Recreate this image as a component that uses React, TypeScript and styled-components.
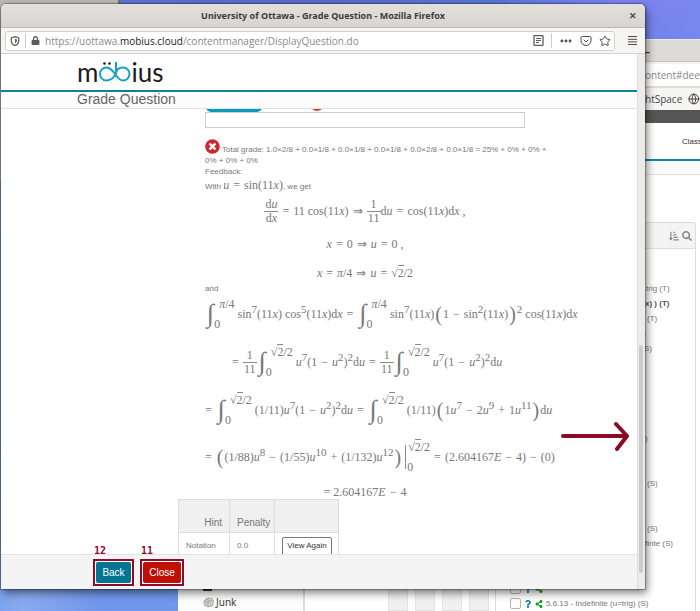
import React from "react";
import styled, { createGlobalStyle } from "styled-components";
import { Globe, MoreHorizontal, Pocket, Star } from "lucide-react";
import { FaLock, FaSearch, FaShareAlt, FaSortAmountDownAlt, FaTimesCircle, FaQuestion } from "react-icons/fa";

const Global = createGlobalStyle`
  *, *::before, *::after { box-sizing: border-box; }
  body { margin: 0; overflow: hidden; }
  button, input { font: inherit; }
`;

const ui = `"Noto Sans", "Open Sans", sans-serif`;
const urlFace = `"Open Sans", "Noto Sans", sans-serif`;
const sans = `"Liberation Sans", Arial, sans-serif`;
const mark = "#8f0a2c";

/* ---------- desktop and windows ---------- */

const Desktop = styled.div`
  position: relative;
  height: 100vh;
  overflow: hidden;
  font-family: ${sans};
  font-size: 8px;
  color: #777;
  background:
    radial-gradient(ellipse 160px 60px at 92% 0, #7d84f0, transparent),
    linear-gradient(90deg, #6c7ad6 0, #5b70cc 25%, #5a6bc8 45%, #5a78d6 80%, #728af0 100%) top / 100% 100px no-repeat,
    linear-gradient(100deg, #7ba6f0 0, #6f98ea 10%, #8aaaf0 16%, #6f96ea 26%, #7da0ee 100%);
`;

const CornerWindow = styled.div`
  position: absolute;
  left: 0;
  top: 0;
  width: 120px;
  height: 180px;
  background: #b9b8b6;
  border-right: 2px solid #6c6c80;
`;

const MailWindow = styled.div`
  position: absolute;
  left: 178px;
  bottom: 0;
  width: 128px;
  height: 120px;
  background: #fcfcfc;
  border-right: 3px solid #ddd;
  display: flex;
  flex-direction: column;
  justify-content: flex-end;
  padding: 0 0 1px 25px;
`;

const Folder = styled.div`
  display: flex;
  align-items: center;
  gap: 2px;
  font: 10px/16px ${ui};
  color: #3a3a3a;
`;

const FolderMark = styled.div`
  width: 9px;
  height: 10px;
  margin-bottom: 3px;
  background: #333;
`;

const BackWindow = styled.div`
  position: absolute;
  left: 305px;
  right: 0;
  top: 39px;
  bottom: 0;
  display: flex;
  flex-direction: column;
  background: #fff;
  border-top: 1px solid #eceaf2;
`;

const Edge = styled.div<{ $h: number; $bg: string }>`
  flex: none;
  display: flex;
  align-items: center;
  height: ${(p) => p.$h}px;
  padding-left: calc(100% - 55px);
  background: ${(p) => p.$bg};
  white-space: nowrap;
  overflow: hidden;
`;

const BackTitle = styled(Edge)`
  border-bottom: 1px solid #c9c5c1;
  font: bold 10px/20px ${ui};
  color: #333;
`;

const BackUrl = styled(Edge)`
  border-top: 2px solid #f4f3f1;
  border-bottom: 2px solid #dedbd8;
  font: 10px/20px ${urlFace};
  color: #888;
`;

const Bookmarks = styled(Edge)`
  gap: 6px;
  font: 10px/20px ${urlFace};
  color: #444;
`;

const BackNav = styled(Edge)`
  padding-left: calc(100% - 18px);
  border-bottom: 2px solid #0d87a3;
  color: #333;
`;

const BackStrip = styled(Edge)`
  border-bottom: 1px solid #ddd;
`;

const BackBody = styled.div`
  flex: 1;
  min-height: 0;
  display: flex;
  padding: 47px 4px 0 83px;
`;

const Grid = styled.div`
  flex: none;
  width: 107px;
  display: grid;
  grid-template-columns: repeat(4, 20px);
  gap: 7px;
`;

const GridCol = styled.div`
  background: #f0f0f0;
  border: 1px solid #e4e4e4;
`;

const Panel = styled.section`
  flex: 1;
  min-width: 0;
  border: 1px solid #ddd;
  border-bottom: 0;
  border-radius: 3px 3px 0 0;
  overflow: hidden;
`;

const PanelHead = styled.header`
  height: 26px;
  display: flex;
  align-items: center;
  justify-content: flex-end;
  gap: 3px;
  padding-right: 3px;
  background: #f4f4f4;
  border-bottom: 1px solid #ddd;
  font-size: 10px;
  color: #888;
`;

const List = styled.ul`
  margin: 0;
  padding: 32px 0 0 14px;
  list-style: none;
`;

const Item = styled.li<{ $indent?: number; $bold?: boolean }>`
  height: 15px;
  display: flex;
  align-items: center;
  gap: 4px;
  padding-left: ${(p) => p.$indent ?? 0}px;
  font-weight: ${(p) => (p.$bold ? "bold" : "normal")};
  color: ${(p) => (p.$bold ? "#555" : "#777")};
  white-space: nowrap;
`;

const QuestionItem = styled(Item)`
  gap: 3px;
`;

const Tick = styled.input`
  appearance: none;
  width: 11px;
  height: 11px;
  margin: 0;
  border: 1px solid #bbb4a8;
  border-radius: 2px;
  background: #fff;
`;

const FrontWindow = styled.main`
  position: absolute;
  inset: 4px 55px 22px 1px;
  display: flex;
  flex-direction: column;
  border-radius: 5px 5px 0 0;
  background: #fff;
  box-shadow: 0 0 1px 1px rgba(0, 0, 0, 0.3), 2px 4px 9px rgba(0, 0, 0, 0.5);
`;

const TitleBar = styled.header`
  flex: none;
  height: 24px;
  display: grid;
  grid-template-columns: 24px 1fr 24px;
  align-items: center;
  border-radius: 5px 5px 0 0;
  background: linear-gradient(#e3e0dc, #d8d4cf);
  border-bottom: 1px solid #bfb8b1;
  font: bold 9px/20px ${ui};
  color: #383c3e;
  text-align: center;
`;

const PlainButton = styled.button`
  display: flex;
  align-items: center;
  justify-content: center;
  padding: 0;
  border: 0;
  background: none;
  color: #4a4a4a;
`;

const ToolBar = styled.div`
  flex: none;
  height: 26px;
  display: flex;
  align-items: center;
  gap: 13px;
  padding: 0 8px 0 4px;
  background: #f6f5f4;
  border-bottom: 1px solid #d3d0cc;
`;

const UrlField = styled.div`
  flex: 1;
  height: 20px;
  display: flex;
  align-items: center;
  gap: 5px;
  padding: 0 3px 0 4px;
  background: #fff;
  border: 1px solid #d4d0cb;
  border-radius: 3px;
  color: #5c5c5c;
`;

const Url = styled.div`
  flex: 1;
  font: 10px/18px ${urlFace};
  color: #8a8a8a;
  b { font-weight: normal; color: #222; }
`;

const UrlTools = styled.div`
  display: flex;
  align-items: center;
  gap: 7px;
`;

const Divider = styled.i`
  width: 1px;
  height: 15px;
  background: #ccc;
`;

const View = styled.div`
  flex: 1;
  min-height: 0;
  display: flex;
`;

const Page = styled.div`
  position: relative;
  flex: 1;
  min-width: 0;
  display: flex;
  flex-direction: column;
`;

const ScrollTrack = styled.div`
  flex: none;
  width: 8px;
  padding: 291px 2px 16px 1px;
  background: #ecebe9;
  border-left: 1px solid #e0dedc;
  display: flex;
`;

const ScrollThumb = styled.div`
  flex: 1;
  border-radius: 2px;
  background: #cbcbcb;
`;

/* ---------- page content ---------- */

const Brand = styled.div`
  flex: none;
  height: 38px;
  display: flex;
  align-items: center;
  padding-left: 76px;
  border-bottom: 2px solid #0d809b;
  font: 26px/34px Lato, sans-serif;
  color: #1c1c1c;
`;

const PageTitle = styled.h1`
  flex: none;
  height: 17px;
  margin: 0;
  padding-left: 76px;
  background: #fcfcfc;
  border-bottom: 1px solid #e2e2e2;
  font: 14px/14px ${sans};
  color: #666;
`;

const Scroll = styled.div`
  flex: 1;
  min-height: 0;
  overflow: hidden;
  display: flex;
  flex-direction: column;
`;

const Clipped = styled.div`
  flex: none;
  height: 3px;
  display: flex;
  align-items: flex-end;
  gap: 49px;
  padding-left: 205px;
  overflow: hidden;
`;

const Pill = styled.button`
  width: 56px;
  height: 18px;
  border: 0;
  border-radius: 5px;
  background: #079bc1;
`;

const RedDot = styled.span`
  width: 12px;
  height: 12px;
  margin-bottom: 1px;
  border-radius: 50%;
  background: #cf3a3a;
`;

const Answer = styled.input`
  flex: none;
  width: 320px;
  height: 16px;
  margin: 0 0 0 204px;
  padding: 0 4px;
  border: 1px solid #ccc;
  background: #fff;
`;

const Feedback = styled.div`
  flex: none;
  width: 352px;
  margin: 11px 0 0 204px;
  line-height: 11px;
`;

const Grade = styled.p`
  margin: 0;
  svg { vertical-align: -2px; margin-right: 2px; }
`;

const Line = styled.p<{ $h: number }>`
  height: ${(p) => p.$h}px;
  margin: 0;
  line-height: ${(p) => p.$h}px;
  white-space: nowrap;
`;

const mathFont = `12px/14px "Liberation Serif", "Times New Roman", serif`;

const Row = styled.div<{ $h: number }>`
  width: 320px;
  height: ${(p) => p.$h}px;
  display: flex;
  align-items: center;
  justify-content: safe center;
  font: ${mathFont};
  white-space: nowrap;
  > * { flex: none; }
`;

const T = styled.span`
  font: ${mathFont};
  sup { font-size: 11px; line-height: 0; vertical-align: 5px; }
`;

const Op = styled.span`
  margin: 0 4px;
`;

const Lead = styled.span`
  margin-right: 4px;
`;

const FracBox = styled.span`
  display: flex;
  flex-direction: column;
  align-items: center;
  line-height: 13px;
`;

const Numer = styled.span`
  min-width: 14px;
  text-align: center;
  padding: 0 1px;
  border-bottom: 1px solid #888;
`;

const Fence = styled.span`
  padding: 0 1px;
  font-size: 20px;
  line-height: 22px;
  font-family: "Liberation Serif", serif;
`;

const IntBox = styled.span`
  display: flex;
  align-items: center;
  margin: 0 3px 0 2px;
`;

const IntSign = styled.span`
  font: 26px/30px "Liberation Serif", serif;
`;

const Limits = styled.span<{ $shift: number }>`
  height: 32px;
  display: flex;
  flex-direction: column;
  justify-content: space-between;
  font-size: 12px;
  line-height: 12px;
  > :first-child { margin-left: ${(p) => p.$shift}px; }
`;

const RootArg = styled.span`
  border-top: 1px solid #888;
`;

const Bar = styled.span`
  width: 1px;
  height: 24px;
  margin: 0 1px 0 3px;
  background: #888;
`;

const Hints = styled.table`
  flex: none;
  width: 161px;
  margin-left: 177px;
  table-layout: fixed;
  border-collapse: collapse;
  th, td { border: 1px solid #ddd; padding: 0 7px; text-align: left; }
  th { height: 33px; padding-top: 13px; background: #f0f0f0; font-size: 10px; font-weight: normal; }
  th:nth-child(1) { width: 51px; text-align: right; }
  th:nth-child(2) { width: 45px; padding-right: 0; }
  td { height: 34px; padding-bottom: 9px; }
`;

const ViewAgain = styled.button`
  width: 50px;
  height: 19px;
  margin-top: 2px;
  padding: 0 0 2px;
  border: 1px solid #777;
  border-radius: 2px;
  background: #fff;
  color: #333;
  white-space: nowrap;
`;

const Footer = styled.footer`
  flex: none;
  height: 35px;
  display: flex;
  align-items: center;
  gap: 6px;
  padding-left: 92px;
  background: #f4f4f4;
  border-top: 1px solid #e3e3e3;
`;

const Marked = styled.div`
  position: relative;
  border: 2px solid ${mark};
  padding: 1px;
  background: #fff;
`;

const MarkLabel = styled.span`
  position: absolute;
  left: -1px;
  top: -16px;
  font: bold 10px/12px "DejaVu Sans Mono", monospace;
  color: ${mark};
`;

const Action = styled.button<{ $bg: string; $w: number }>`
  display: block;
  width: ${(p) => p.$w}px;
  height: 21px;
  padding: 0;
  border: 0;
  border-radius: 2px;
  background: ${(p) => p.$bg};
  color: #fff;
  font-size: 10px;
`;

const Arrow = styled.svg`
  position: absolute;
  right: 8px;
  top: 366px;
`;

/* ---------- formula pieces ---------- */

type Kids = { children: React.ReactNode };

const Frac = ({ top, bottom }: { top: React.ReactNode; bottom: React.ReactNode }) => (
  <FracBox><Numer>{top}</Numer><span>{bottom}</span></FracBox>
);
const Root = ({ children }: Kids) => <>√<RootArg>{children}</RootArg></>;
const Int = ({ to }: { to: React.ReactNode }) => (
  <IntBox><IntSign>∫</IntSign><Limits $shift={5}><span>{to}</span><span>0</span></Limits></IntBox>
);
const Eq = () => <Op>=</Op>;
const Imp = () => <Op>⇒</Op>;
const Minus = () => <Op>−</Op>;
const U = ({ n }: { n?: string }) => <><i>u</i>{n && <sup>{n}</sup>}</>;
const Du = () => <>d<i>u</i></>;
const Dx = () => <>d<i>x</i></>;
const Arg = () => <>(11<i>x</i>)</>;
const half = <><Root>2</Root>/2</>;
const quarter = <><i>π</i>/4</>;

const Logo = () => (
  <svg width="33" height="24" viewBox="-1 0 33 24" fill="none" strokeWidth="2" role="img" aria-label="öb">
    <path
      d="M17 2V13C16 17 12 20.500 7.500 20.500A6.500 6.500 0 0 1 7.500 7.500C11.500 7.500 14 11 16.500 14.500C19 18 20.500 20.500 24 20.500A6.500 6.500 0 0 0 24 7.500C20 7.500 17.500 10 17 13"
      stroke="#17a0c4"
    />
    <circle cx="5.500" cy="3.500" r="1.300" fill="#1c1c1c" />
    <circle cx="10.500" cy="3.500" r="1.300" fill="#1c1c1c" />
  </svg>
);

const ShieldIcon = () => (
  <svg width="10" height="10" viewBox="0 0 16 16" fill="none" stroke="#5c5c5c" strokeWidth="2">
    <path d="M8 1L14 3V7C14 11 11 14 8 15C5 14 2 11 2 7V3Z" />
    <path d="M8 4.500V11.500C9.800 10.500 11 9 11 7V5.500Z" fill="#5c5c5c" stroke="none" />
  </svg>
);

const ReaderIcon = () => (
  <svg width="11" height="11" viewBox="0 0 11 11" fill="none" stroke="#5c5c5c">
    <rect x="1" y="0.500" width="9" height="10" rx="1" strokeWidth="1.300" />
    <path d="M3 3.500H8M3 5.500H8M3 7.500H6" />
  </svg>
);

const MenuIcon = () => (
  <svg width="9" height="9" viewBox="0 0 9 9" fill="none" stroke="#4a4a4a">
    <path d="M0 0.500H9M0 3.300H9M0 5.900H9M0 8.500H9" />
  </svg>
);

const JunkIcon = () => (
  <svg width="11" height="11" viewBox="0 0 11 11" fill="#d8d8cd" stroke="#888" strokeWidth="0.600">
    <path d="M1 4L4 1L9 1.500L10.500 4L9.500 9L5 10L1 8Z" />
    <path d="M1 4L5 5L10 3.500M5 5V10M3 2.500L7 3.500M7 6L8.500 8M2 6L4 7.500" />
  </svg>
);

const items: { text: string; indent: number; bold?: boolean }[] = [
  { text: "trig (T)", indent: 136 },
  { text: "x) ) (T)", indent: 135, bold: true },
  { text: "(T)", indent: 137 },
  { text: ")", indent: 133 },
  { text: "S)", indent: 134 },
  { text: "", indent: 0 },
  { text: "", indent: 0 },
  { text: "", indent: 0 },
  { text: "", indent: 0 },
  { text: "", indent: 0 },
  { text: ")", indent: 135 },
  { text: "", indent: 0 },
  { text: "", indent: 0 },
  { text: "(S)", indent: 137 },
  { text: "", indent: 0 },
  { text: "", indent: 0 },
  { text: "(S)", indent: 137 },
  { text: "finte (S)", indent: 135 },
  { text: "", indent: 0 },
  { text: "", indent: 0 },
];

const QuestionRow = ({ label }: { label: string }) => (
  <QuestionItem>
    <Tick type="checkbox" aria-label={label || "Question"} />
    <FaQuestion size={8} color="#0a84c0" />
    <FaShareAlt size={8} color="#12a012" />
    <span>{label}</span>
  </QuestionItem>
);

export default function App() {
  return (
    <Desktop>
      <Global />
      <CornerWindow />
      <MailWindow>
        <FolderMark />
        <Folder><JunkIcon />Junk</Folder>
      </MailWindow>

      <BackWindow>
        <BackTitle $h={22} $bg="#dedad6">–</BackTitle>
        <BackUrl $h={26} $bg="#fff">ontent#deee</BackUrl>
        <Bookmarks $h={22} $bg="#f6f5f4">htSpace<Globe size={12} /></Bookmarks>
        <Edge $h={13} $bg="#555" />
        <BackNav $h={38} $bg="#fff">Class</BackNav>
        <BackStrip $h={14} $bg="#fafafa" />
        <BackBody>
          <Grid><GridCol /><GridCol /><GridCol /><GridCol /></Grid>
          <Panel>
            <PanelHead><FaSortAmountDownAlt /><FaSearch /></PanelHead>
            <List>
              {items.map((it, i) => (
                <Item key={i} $indent={it.indent} $bold={it.bold}>{it.text}</Item>
              ))}
              <QuestionRow label="" />
              <QuestionRow label="5.6.13 - Indefinite (u=trig) (S)" />
            </List>
          </Panel>
        </BackBody>
      </BackWindow>

      <FrontWindow>
        <TitleBar>
          <span />
          <span>University of Ottawa - Grade Question - Mozilla Firefox</span>
          <PlainButton aria-label="Close window">✕</PlainButton>
        </TitleBar>
        <ToolBar>
          <UrlField>
            <ShieldIcon />
            <Divider />
            <FaLock size={9} />
            <Url>https://uottawa.<b>mobius.cloud</b>/contentmanager/DisplayQuestion.do</Url>
            <UrlTools>
              <PlainButton aria-label="Reader view"><ReaderIcon /></PlainButton>
              <Divider />
              <PlainButton aria-label="Page actions"><MoreHorizontal size={14} strokeWidth={3} /></PlainButton>
              <PlainButton aria-label="Save to Pocket"><Pocket size={12} /></PlainButton>
              <PlainButton aria-label="Bookmark"><Star size={12} /></PlainButton>
            </UrlTools>
          </UrlField>
          <PlainButton aria-label="Menu"><MenuIcon /></PlainButton>
        </ToolBar>

        <View>
          <Page>
            <Brand><span>m</span><Logo /><span>ius</span></Brand>
            <PageTitle>Grade Question</PageTitle>
            <Scroll>
              <Clipped><Pill aria-label="Preview" /><RedDot /></Clipped>
              <Answer aria-label="Response" />
              <Feedback>
                <Grade>
                  <FaTimesCircle size={15} color="#d0282e" />
                  Total grade: 1.0×2/8 + 0.0×1/8 + 0.0×1/8 + 0.0×1/8 + 0.0×2/8 + 0.0×1/8 = 25% + 0% + 0% + 0% + 0% + 0%
                </Grade>
                <Line $h={12}>Feedback:</Line>
                <Line $h={18}>With <T><U /><Eq />sin<Arg /></T>, we get</Line>
                <Row $h={30}>
                  <Frac top={<Du />} bottom={<Dx />} />
                  <T><Eq />11 cos<Arg /><Imp /></T>
                  <Frac top="1" bottom="11" />
                  <T><Du /><Eq />cos<Arg /><Dx /> ,</T>
                </Row>
                <Row $h={36}><T><i>x</i><Eq />0<Imp /><U /><Eq />0 ,</T></Row>
                <Row $h={22}><T><i>x</i><Eq />{quarter}<Imp /><U /><Eq />{half}</T></Row>
                <Line $h={10}>and</Line>
                <Row $h={40}>
                  <Int to={quarter} />
                  <T>sin<sup>7</sup>(11<i>x</i>) cos<sup>5</sup><Arg /><Dx /><Eq /></T>
                  <Int to={quarter} />
                  <T>sin<sup>7</sup><Arg /></T>
                  <Fence>(</Fence>
                  <T>1<Minus />sin<sup>2</sup><Arg /></T>
                  <Fence>)</Fence>
                  <T><sup>2</sup> cos<Arg /><Dx /></T>
                </Row>
                <Row $h={56}>
                  <Eq /><Frac top="1" bottom="11" /><Int to={half} />
                  <T><U n="7" />(1<Minus /><U n="2" />)<sup>2</sup><Du /><Eq /></T>
                  <Frac top="1" bottom="11" /><Int to={half} />
                  <T><U n="7" />(1<Minus /><U n="2" />)<sup>2</sup><Du /></T>
                </Row>
                <Row $h={40}>
                  <Lead>=</Lead><Int to={half} />
                  <T>(1/11)<U n="7" />(1<Minus /><U n="2" />)<sup>2</sup><Du /><Eq /></T>
                  <Int to={half} />
                  <T>(1/11)</T><Fence>(</Fence>
                  <T>1<U n="7" /><Minus />2<U n="9" /><Op>+</Op>1<U n="11" /></T>
                  <Fence>)</Fence><T><Du /></T>
                </Row>
                <Row $h={54}>
                  <Lead>=</Lead><Fence>(</Fence>
                  <T>(1/88)<U n="8" /><Minus />(1/55)<U n="10" /><Op>+</Op>(1/132)<U n="12" /></T>
                  <Fence>)</Fence><Bar />
                  <Limits $shift={1}><span>{half}</span><span>0</span></Limits>
                  <T><Eq />(2.604167<i>E</i><Minus />4)<Minus />(0)</T>
                </Row>
                <Row $h={15}><T>= 2.604167<i>E</i><Minus />4</T></Row>
              </Feedback>
              <Hints>
                <thead><tr><th>Hint</th><th>Penalty</th><th aria-label="Action" /></tr></thead>
                <tbody><tr><td>Notation</td><td>0.0</td><td><ViewAgain>View Again</ViewAgain></td></tr></tbody>
              </Hints>
            </Scroll>
            <Footer>
              <Marked><MarkLabel>12</MarkLabel><Action $w={35} $bg="#057493">Back</Action></Marked>
              <Marked><MarkLabel>11</MarkLabel><Action $w={38} $bg="#c00f06">Close</Action></Marked>
            </Footer>
            <Arrow width="68" height="32" viewBox="0 0 68 32" fill="none" stroke="#8c0a26" strokeWidth="4" strokeLinecap="round" strokeLinejoin="round">
              <path d="M2 16H66M55 4L66 16L56 29" />
            </Arrow>
          </Page>
          <ScrollTrack><ScrollThumb /></ScrollTrack>
        </View>
      </FrontWindow>
    </Desktop>
  );
}
